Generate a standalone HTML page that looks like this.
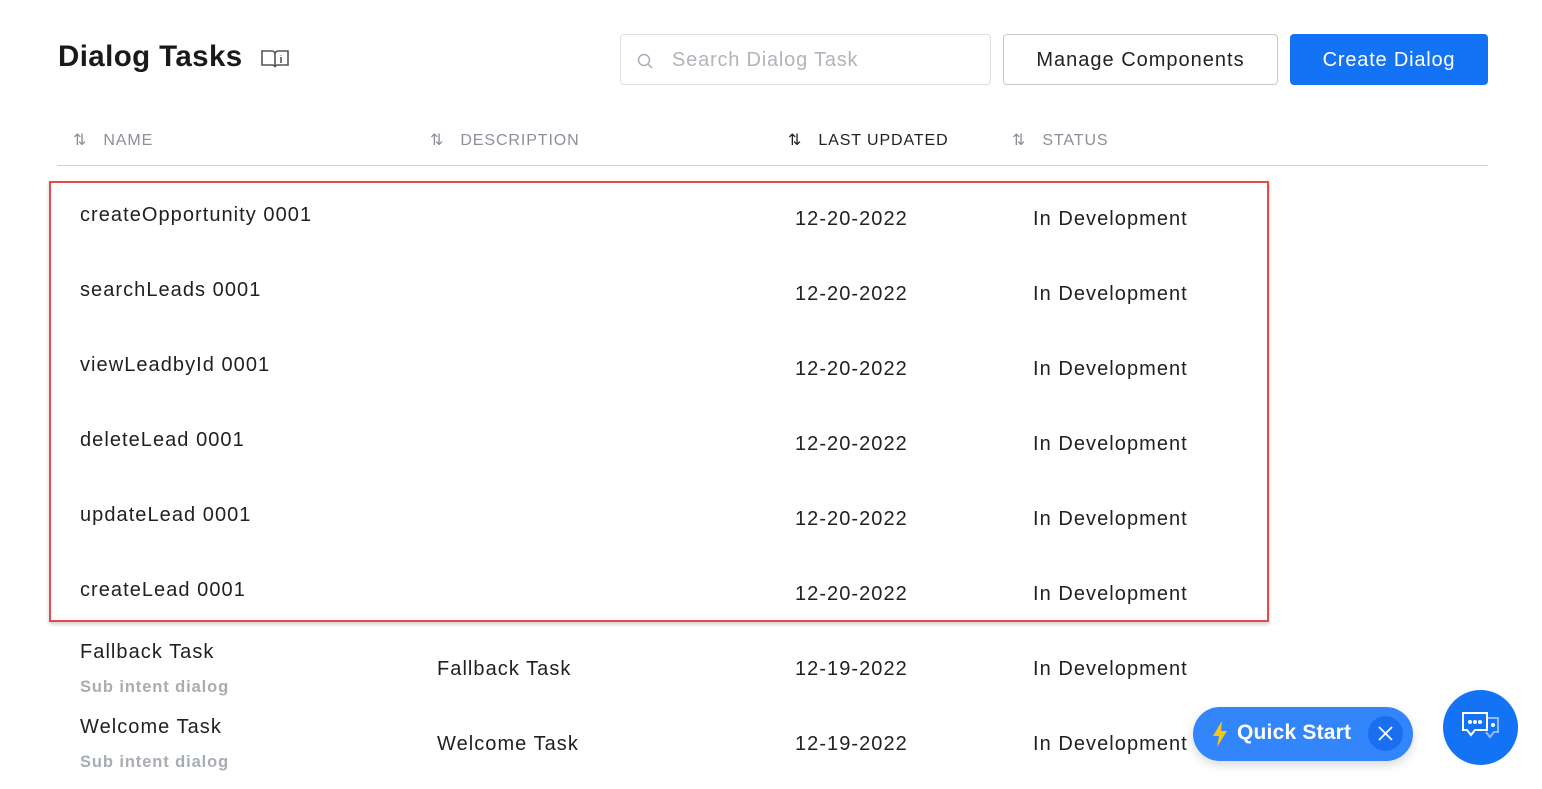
<!DOCTYPE html>
<html><head><style>
body{margin:0;width:1542px;height:789px;background:#fff;font-family:"Liberation Sans",sans-serif;position:relative;overflow:hidden;color:#1f1f1f}
.a{position:absolute;white-space:nowrap}
.h{font-size:16px;color:#8a8f99;letter-spacing:.9px}
.r{font-size:20px;color:#202124;letter-spacing:1.05px}
.s{font-size:16.5px;color:#9aa0a8;letter-spacing:.9px;font-weight:bold;color:#a8adb4}
</style></head><body>
<div class="a" style="left:58px;top:40px;font-size:29.5px;font-weight:bold;color:#1a1a1a;letter-spacing:.4px">Dialog Tasks</div>
<svg class="a" style="left:261px;top:48px" width="28" height="22" viewBox="0 0 28 22" fill="none" stroke="#555" stroke-width="1.6"><path d="M1 3h10a3 3 0 0 1 3 3v13a3 3 0 0 0-3-2H1z M27 3H17a3 3 0 0 0-3 3v13a3 3 0 0 1 3-2h10z"/><path d="M20 9v6M20 7v.5" /></svg>
<div class="a" style="left:620px;top:34px;width:369px;height:49px;border:1px solid #dcdfe3;border-radius:4px"></div>
<svg class="a" style="left:637px;top:53px" width="17" height="17" viewBox="0 0 17 17" fill="none" stroke="#aab" stroke-width="1.5"><circle cx="7" cy="7" r="5.5"/><path d="M11 11l4 4"/></svg>
<div class="a" style="left:672px;top:49px;font-size:20px;color:#b0b5bc;letter-spacing:.8px">Search Dialog Task</div>
<div class="a" style="left:1003px;top:34px;width:273px;height:49px;border:1px solid #c5c8cc;border-radius:4px;font-size:20px;letter-spacing:1px;text-align:center;line-height:51px;color:#222">Manage Components</div>
<div class="a" style="left:1290px;top:34px;width:198px;height:51px;background:#1473f5;border-radius:4px;font-size:20px;letter-spacing:.8px;text-align:center;line-height:52px;color:#fff">Create Dialog</div>
<div class="a h" style="left:73px;top:130px">⇅&nbsp;&nbsp; NAME</div>
<div class="a h" style="left:430px;top:130px">⇅&nbsp;&nbsp; DESCRIPTION</div>
<div class="a h" style="left:788px;top:130px;color:#222">⇅&nbsp;&nbsp; LAST UPDATED</div>
<div class="a h" style="left:1012px;top:130px">⇅&nbsp;&nbsp; STATUS</div>
<div class="a" style="left:57px;top:165px;width:1431px;height:1px;background:#cfd2d6"></div>
<div class="a" style="left:49px;top:181px;width:1216px;height:437px;border:2px solid #e8494b;box-shadow:0 2px 4px rgba(0,0,0,.2)"></div>
<div class="a r" style="left:80px;top:204px">createOpportunity 0001</div><div class="a r" style="left:795px;top:208px">12-20-2022</div><div class="a r" style="left:1033px;top:208px">In Development</div>
<div class="a r" style="left:80px;top:279px">searchLeads 0001</div><div class="a r" style="left:795px;top:283px">12-20-2022</div><div class="a r" style="left:1033px;top:283px">In Development</div>
<div class="a r" style="left:80px;top:354px">viewLeadbyId 0001</div><div class="a r" style="left:795px;top:358px">12-20-2022</div><div class="a r" style="left:1033px;top:358px">In Development</div>
<div class="a r" style="left:80px;top:429px">deleteLead 0001</div><div class="a r" style="left:795px;top:433px">12-20-2022</div><div class="a r" style="left:1033px;top:433px">In Development</div>
<div class="a r" style="left:80px;top:504px">updateLead 0001</div><div class="a r" style="left:795px;top:508px">12-20-2022</div><div class="a r" style="left:1033px;top:508px">In Development</div>
<div class="a r" style="left:80px;top:579px">createLead 0001</div><div class="a r" style="left:795px;top:583px">12-20-2022</div><div class="a r" style="left:1033px;top:583px">In Development</div>
<div class="a r" style="left:80px;top:641px">Fallback Task</div><div class="a s" style="left:80px;top:678px">Sub intent dialog</div><div class="a r" style="left:437px;top:658px">Fallback Task</div><div class="a r" style="left:795px;top:658px">12-19-2022</div><div class="a r" style="left:1033px;top:658px">In Development</div>
<div class="a r" style="left:80px;top:716px">Welcome Task</div><div class="a s" style="left:80px;top:753px">Sub intent dialog</div><div class="a r" style="left:437px;top:733px">Welcome Task</div><div class="a r" style="left:795px;top:733px">12-19-2022</div><div class="a r" style="left:1033px;top:733px">In Development</div>
<div class="a" style="left:1193px;top:707px;width:220px;height:54px;border-radius:27px;background:#3385fb;box-shadow:0 4px 10px rgba(0,0,0,.15)"></div>
<svg class="a" style="left:1210px;top:720px" width="20" height="28" viewBox="0 0 20 28"><path d="M12 1L3 16h6l-2 11 10-16h-6z" fill="#f5c518"/></svg>
<div class="a" style="left:1237px;top:721px;font-size:21px;font-weight:bold;color:#fff;letter-spacing:.2px">Quick Start</div>
<div class="a" style="left:1368px;top:716px;width:35px;height:35px;border-radius:50%;background:#1a6ff0"></div>
<svg class="a" style="left:1376px;top:724px" width="19" height="19" viewBox="0 0 19 19" stroke="#fff" stroke-width="1.8"><path d="M3 3l13 13M16 3L3 16"/></svg>
<div class="a" style="left:1443px;top:690px;width:75px;height:75px;border-radius:50%;background:#1473f5"></div>
<svg class="a" style="left:1460px;top:710px" width="42" height="36" viewBox="0 0 42 36" fill="none" stroke-width="2"><path d="M27 8h11v14h-4l-4 5-4-5" stroke="#8fb9ff"/><path d="M3 3h24v17H15l-4 5-4-5H3z" stroke="#fff"/><circle cx="10" cy="12" r="1" fill="#fff" stroke="#fff"/><circle cx="15" cy="12" r="1" fill="#fff" stroke="#fff"/><circle cx="20" cy="12" r="1" fill="#fff" stroke="#fff"/><circle cx="33" cy="15" r="1" fill="#fff" stroke="#fff"/></svg>
</body></html>
